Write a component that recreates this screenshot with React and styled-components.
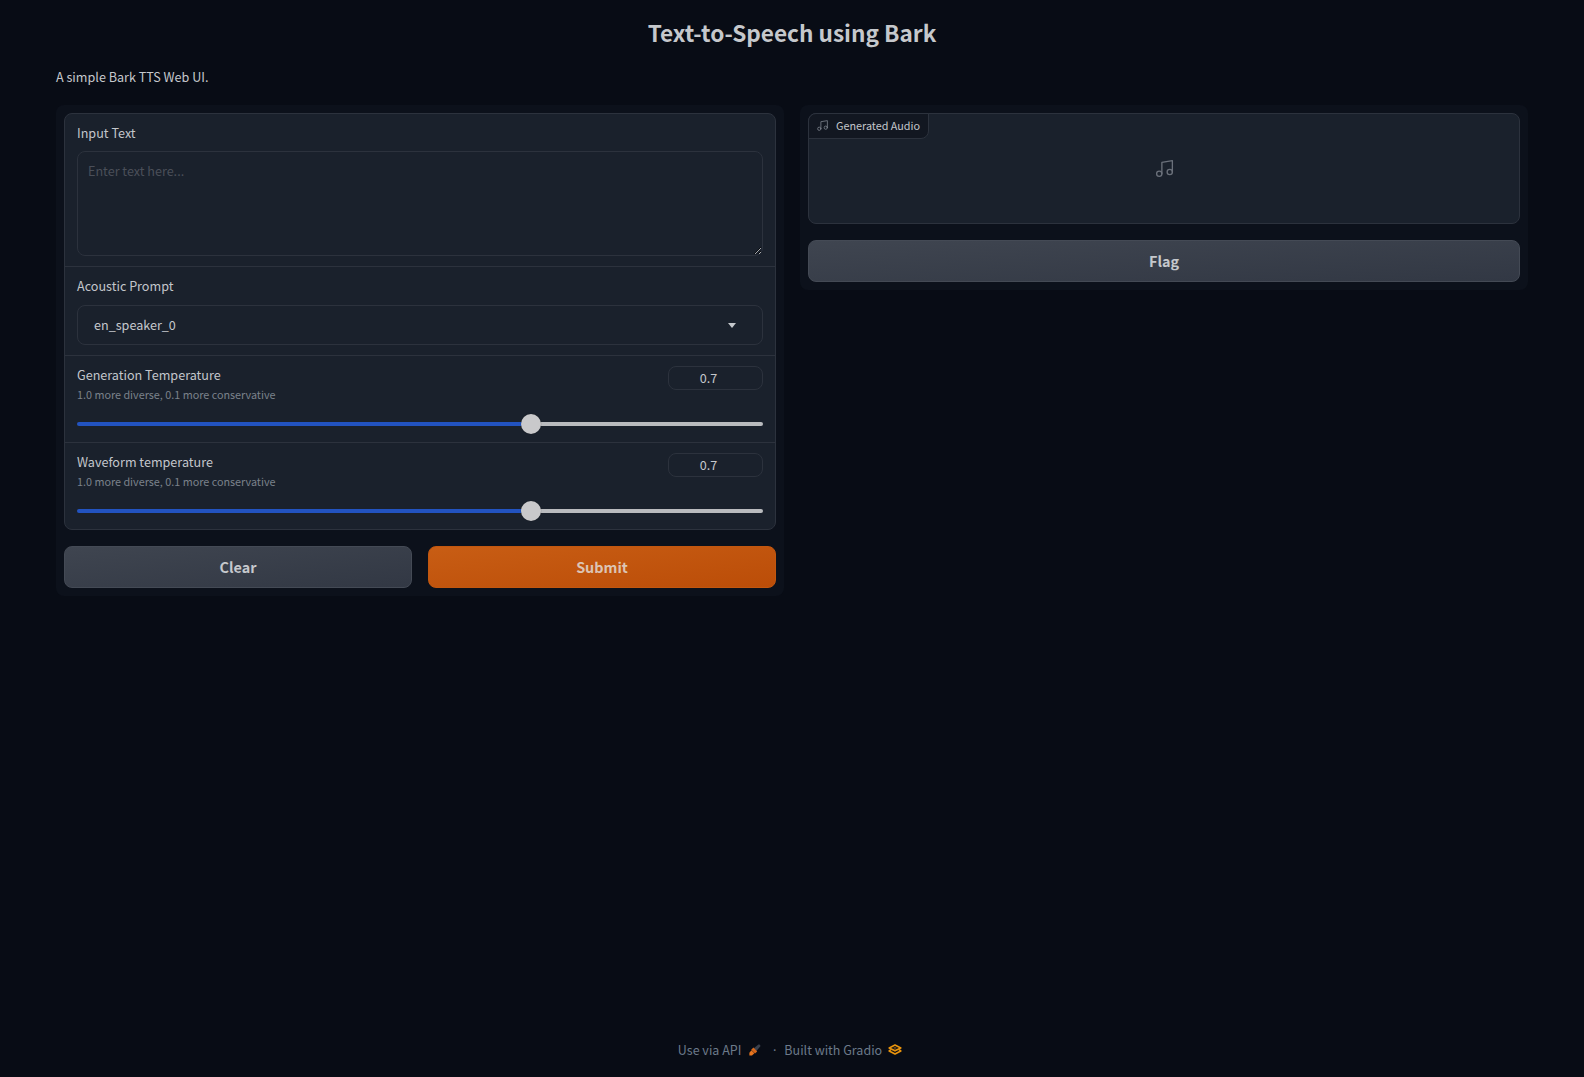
import React from "react";
import styled, { createGlobalStyle } from "styled-components";

const FONT = `"Noto Sans CJK JP", "Noto Sans", sans-serif`;

const GlobalStyle = createGlobalStyle`
  html, body {
    margin: 0;
    background: #080c15;
  }
  * {
    box-sizing: border-box;
  }
`;

const NoteIcon = ({ size }) => (
  <svg
    width={size}
    height={size}
    viewBox="0 0 24 24"
    fill="none"
    stroke="currentColor"
    strokeWidth="1.5"
    strokeLinecap="round"
    strokeLinejoin="round"
  >
    <path d="M9 18V5l12-2v13" />
    <circle cx="6" cy="18" r="3" />
    <circle cx="18" cy="16" r="3" />
  </svg>
);

const RocketIcon = () => (
  <svg width="12" height="12" viewBox="0 0 12 12">
    <path d="M4.6 4.6 9.4.6c1-.7 2.5.7 1.8 1.8L7.2 7.2z" fill="#3a404c" />
    <path d="M4.4 3.4 8.2 7.4 6 9.6 2.2 5.8z" fill="#d9681a" />
    <path d="M2.4 6.2 5.4 9.2 3 11.5.4 11.6.4 8.8z" fill="#e8761f" />
  </svg>
);

const GradioLogo = styled.svg`
  margin-left: -2px;
`;

const GradioIcon = () => (
  <GradioLogo width="14" height="11" viewBox="0 0 14 11" fill="none" strokeLinejoin="round">
    <path d="M7 1 12.8 3.9 7 6.8 1.2 3.9z" stroke="#e8930c" strokeWidth="1.7" />
    <path d="M3 5.6 1.2 6.9 7 10 12.8 6.9 11 5.6" stroke="#e8930c" strokeWidth="1.7" />
    <path d="M5 3.9 7 3 9 3.9 7 4.8z" fill="#8a5a12" />
  </GradioLogo>
);

const SliderField = ({ label, value, min, max }) => {
  const pct = ((value - min) / (max - min)) * 100;
  return (
    <Section $padBottom={8}>
      <SliderHead>
        <div>
          <Label>{label}</Label>
          <Info>1.0 more diverse, 0.1 more conservative</Info>
        </div>
        <NumberInput type="number" defaultValue={value} />
      </SliderHead>
      <Range
        type="range"
        min={min}
        max={max}
        step="0.01"
        defaultValue={value}
        style={{ "--fill": `${pct}%` }}
      />
    </Section>
  );
};

export default function App() {
  return (
    <>
      <GlobalStyle />
      <Page>
        <Title>Text-to-Speech using Bark</Title>
        <Description>A simple Bark TTS Web UI.</Description>
        <Columns>
          <Panel>
            <Block>
              <Section>
                <Label>Input Text</Label>
                <TextArea placeholder="Enter text here..." />
              </Section>
              <Section>
                <Label>Acoustic Prompt</Label>
                <SelectBox>
                  <SelectValue>en_speaker_0</SelectValue>
                  <Caret />
                </SelectBox>
              </Section>
              <SliderField label="Generation Temperature" value={0.7} min={0.1} max={1} />
              <SliderField label="Waveform temperature" value={0.7} min={0.1} max={1} />
            </Block>
            <ButtonRow>
              <Button>Clear</Button>
              <Button $primary>Submit</Button>
            </ButtonRow>
          </Panel>
          <Panel>
            <AudioBlock>
              <AudioTag>
                <NoteIcon size={13} />
                Generated Audio
              </AudioTag>
              <AudioEmpty>
                <NoteIcon size={21} />
              </AudioEmpty>
            </AudioBlock>
            <Button>Flag</Button>
          </Panel>
        </Columns>
        <Footer>
          <span>Use via API</span>
          <RocketIcon />
          <Dot>·</Dot>
          <span>Built with Gradio</span>
          <GradioIcon />
        </Footer>
      </Page>
    </>
  );
}

const Page = styled.div`
  display: flex;
  flex-direction: column;
  min-height: 1077px;
  padding: 15px 56px 0;
  font-family: ${FONT};
  color: #d0d3d8;
`;

const Title = styled.h1`
  margin: 0;
  height: 36px;
  line-height: 36px;
  text-align: center;
  font-size: 22.6px;
  font-weight: 700;
  color: #c5c8cc;
`;

const Description = styled.p`
  margin: 16px 0 0;
  height: 20px;
  line-height: 20px;
  font-size: 12.6px;
  color: #c5c8cc;
`;

const Columns = styled.div`
  display: flex;
  align-items: flex-start;
  gap: 16px;
  margin-top: 18px;
`;

const Panel = styled.div`
  flex: 1;
  display: flex;
  flex-direction: column;
  gap: 16px;
  padding: 8px;
  border-radius: 8px;
  background: #0c111b;
`;

const Block = styled.div`
  border: 1px solid #2c323d;
  border-radius: 8px;
  background: #1a212c;
  overflow: hidden;
`;

const Section = styled.div`
  padding: 10px 12px ${(p) => p.$padBottom ?? 10}px;
  border-bottom: 1px solid #2c323d;

  &:last-child {
    border-bottom: none;
  }
`;

const Label = styled.div`
  height: 20px;
  line-height: 17px;
  font-size: 12.6px;
  color: #c3c6cb;
`;

const Info = styled.div`
  height: 18px;
  line-height: 14px;
  margin-top: 1px;
  font-size: 10.8px;
  color: #7b818b;
`;

const TextArea = styled.textarea`
  display: block;
  width: 100%;
  height: 105px;
  margin-top: 7px;
  padding: 9px 10px;
  border: 1px solid #2c323d;
  border-radius: 8px;
  outline: none;
  background: #1a212c;
  font-family: ${FONT};
  font-size: 12.6px;
  line-height: 20px;
  color: #c3c6cb;

  &::placeholder {
    color: #4a4f59;
  }
`;

const SelectBox = styled.div`
  display: flex;
  align-items: center;
  justify-content: space-between;
  height: 40px;
  margin-top: 8px;
  padding: 0 26px 0 16px;
  border: 1px solid #2c323d;
  border-radius: 8px;
`;

const SelectValue = styled.span`
  padding-bottom: 2px;
  font-size: 12.6px;
  color: #c5c8cc;
`;

const Caret = styled.span`
  width: 0;
  height: 0;
  border-left: 4.5px solid transparent;
  border-right: 4.5px solid transparent;
  border-top: 5px solid #c5c8cc;
`;

const SliderHead = styled.div`
  display: flex;
  align-items: flex-start;
  justify-content: space-between;
`;

const NumberInput = styled.input`
  width: 95px;
  height: 24px;
  padding: 0 14px 2px 0;
  border: 1px solid #2c323d;
  border-radius: 8px;
  outline: none;
  background: #1a212c;
  font-family: ${FONT};
  font-size: 12.6px;
  text-align: center;
  color: #c5c8cc;
  appearance: textfield;

  &::-webkit-inner-spin-button {
    appearance: none;
  }
`;

const Range = styled.input`
  display: block;
  width: 100%;
  height: 20px;
  margin: 9px 0 0;
  appearance: none;
  background: transparent;

  &::-webkit-slider-runnable-track {
    height: 4px;
    border-radius: 2px;
    background: linear-gradient(
      to right,
      #2253c0 var(--fill),
      #b9bbbe var(--fill)
    );
  }

  &::-webkit-slider-thumb {
    appearance: none;
    width: 20px;
    height: 20px;
    margin-top: -8px;
    border-radius: 50%;
    background: #c9c9cb;
    box-shadow: 0 0 1px rgba(0, 0, 0, 0.5);
  }
`;

const ButtonRow = styled.div`
  display: flex;
  gap: 16px;
`;

const Button = styled.button`
  flex: 1 0 42px;
  height: 42px;
  padding: 0 0 2px;
  border: 1px solid ${(p) => (p.$primary ? "#c2570f" : "#444a55")};
  border-radius: 8px;
  background: ${(p) =>
    p.$primary
      ? "linear-gradient(to bottom right, #c85d14, #bb4d08)"
      : "linear-gradient(to bottom right, #3f4550, #323844)"};
  font-family: ${FONT};
  font-size: 14.4px;
  font-weight: 700;
  color: ${(p) => (p.$primary ? "#dcc4b4" : "#c5c8cc")};
`;

const AudioBlock = styled.div`
  position: relative;
  height: 111px;
  border: 1px solid #2c323d;
  border-radius: 8px;
  background: #1a212c;
`;

const AudioTag = styled.div`
  position: absolute;
  top: -1px;
  left: -1px;
  display: flex;
  align-items: center;
  gap: 7px;
  height: 26px;
  padding: 0 8px 2px 7px;
  border: 1px solid #2c323d;
  border-radius: 8px 0 8px 0;
  background: #121721;
  font-size: 10.8px;
  color: #c3c6cb;

  svg {
    color: #7b818b;
  }
`;

const AudioEmpty = styled.div`
  display: flex;
  align-items: center;
  justify-content: center;
  height: 100%;
  color: #6b717b;
`;

const Footer = styled.footer`
  display: flex;
  align-items: center;
  justify-content: center;
  gap: 8px;
  margin-top: auto;
  height: 54px;
  padding: 0 4px 1px 0;
  font-size: 12.5px;
  color: #6c7a8a;
`;

const Dot = styled.span`
  margin: 0 -2px 0 2px;
`;
